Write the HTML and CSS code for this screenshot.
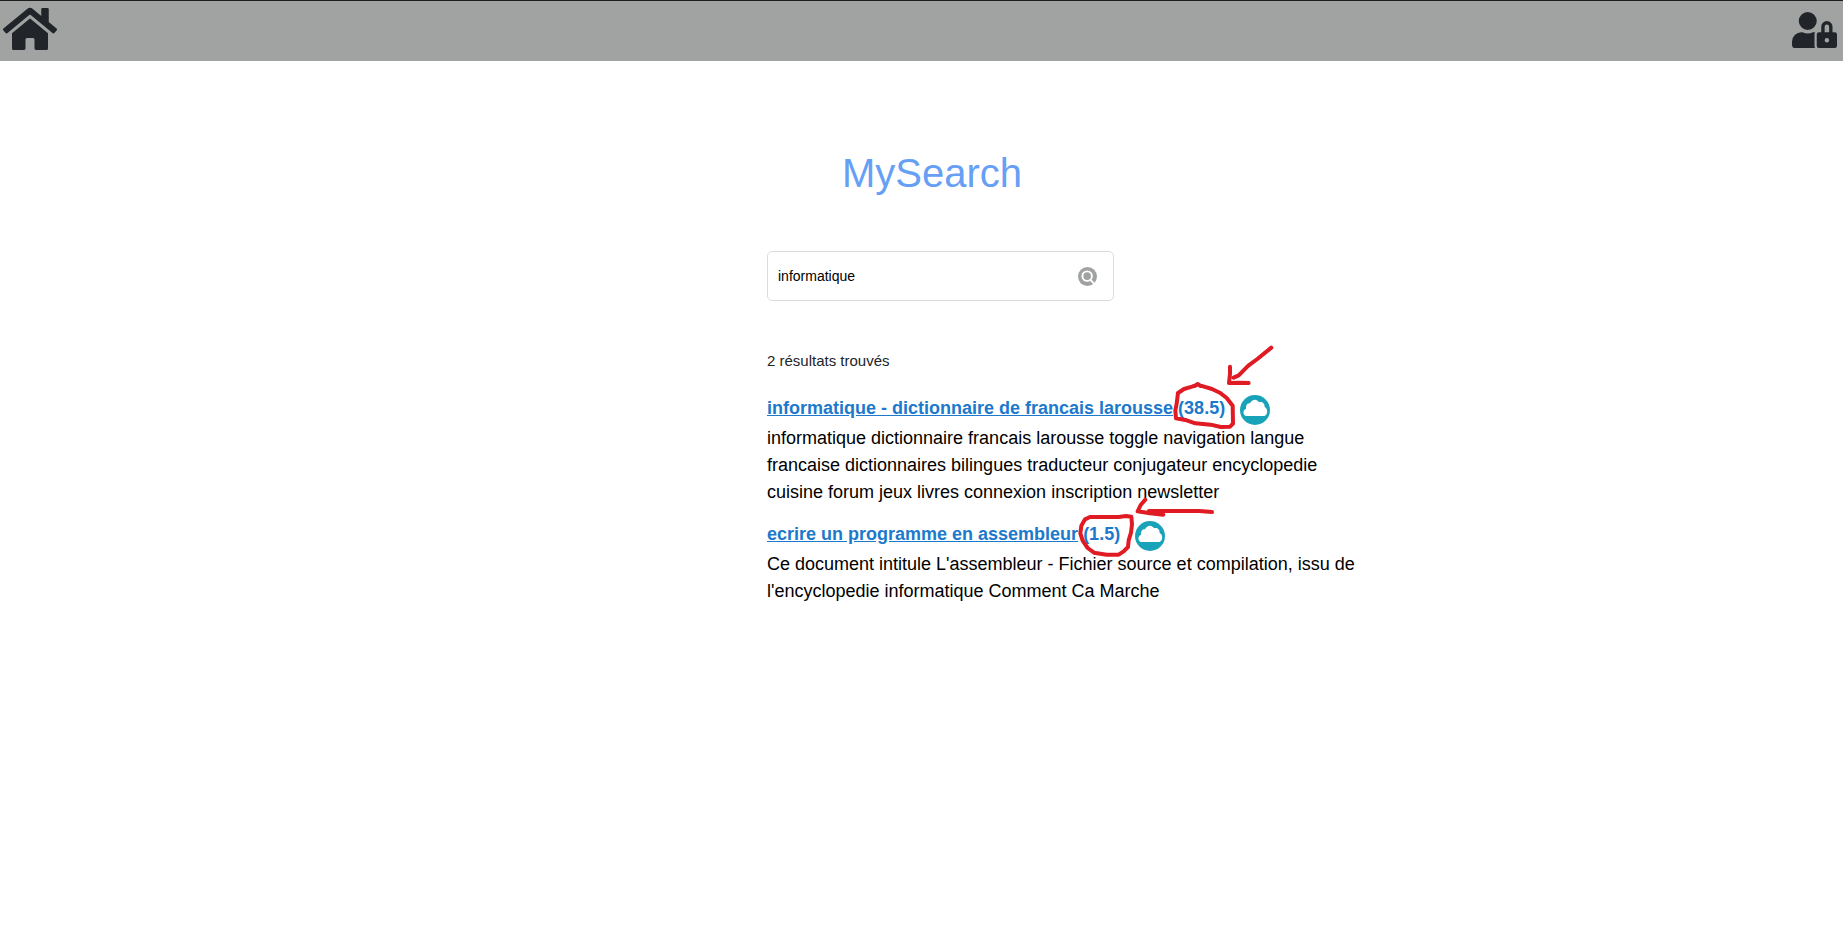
FILE: index.html
```
<!DOCTYPE html>
<html lang="fr">
<head>
<meta charset="utf-8">
<title>MySearch</title>
<link rel="stylesheet" href="styles.css">
</head>
<body>
<header class="topbar">
  <svg class="icon-home" viewBox="0 0 576 512"><path d="M280.37 148.26L96 300.11V464a16 16 0 0 0 16 16l112.06-.29a16 16 0 0 0 15.92-16V368a16 16 0 0 1 16-16h64a16 16 0 0 1 16 16v95.64a16 16 0 0 0 16 16.05L464 480a16 16 0 0 0 16-16V300L295.67 148.26a12.19 12.19 0 0 0-15.3 0zM571.6 251.47L488 182.56V44.05a12 12 0 0 0-12-12h-56a12 12 0 0 0-12 12v72.61L318.47 43a48 48 0 0 0-61 0L4.34 251.47a12 12 0 0 0-1.6 16.9l25.5 31A12 12 0 0 0 45.15 301l235.22-193.74a12.19 12.19 0 0 1 15.3 0L530.9 301a12 12 0 0 0 16.9-1.6l25.5-31a12 12 0 0 0-1.7-16.93z"/></svg>
  <svg class="icon-lock" viewBox="0 0 640 512"><path d="M224 256A128 128 0 1 0 96 128a128 128 0 0 0 128 128zm96 64a63.08 63.08 0 0 1 8.1-30.5c-4.8-.5-9.5-1.5-14.5-1.5h-16.7a174.08 174.08 0 0 1-145.8 0h-16.7A134.43 134.43 0 0 0 0 422.4V464a48 48 0 0 0 48 48h280.9a63.54 63.54 0 0 1-8.9-32zm288-32h-32v-80a80 80 0 0 0-160 0v80h-32a32 32 0 0 0-32 32v160a32 32 0 0 0 32 32h224a32 32 0 0 0 32-32V320a32 32 0 0 0-32-32zM496 432a32 32 0 1 1 32-32 32 32 0 0 1-32 32zm32-144h-64v-80a32 32 0 0 1 64 0z"/></svg>
</header>
<main class="content">
  <h1 class="brand">MySearch</h1>
  <div class="search">
    <span class="query">informatique</span>
    <svg class="search-icon" viewBox="0 0 54 54"><circle cx="27" cy="27" r="27"/><circle class="lens" cx="26" cy="26" r="13.5"/><path class="lens" d="M35 36l13 14"/></svg>
  </div>
  <p class="count">2 résultats trouvés</p>
  <article class="result">
    <div class="result-head"><h2 class="result-title"><a class="link" href="#">informatique - dictionnaire de francais larousse</a> (38.5)</h2>
      <svg class="cloud" viewBox="0 0 90 90"><circle cx="45" cy="45" r="45"/><path d="M20 63C7 61 8 45 18 41C17 30 22 24 30 25C36 12 51 11 57 22C66 19 75 26 74 36C84 41 84 58 75 62Q73 63 70 63Z"/></svg></div>
    <p class="excerpt">informatique dictionnaire francais larousse toggle navigation langue francaise dictionnaires bilingues traducteur conjugateur encyclopedie cuisine forum jeux livres connexion inscription newsletter</p>
  </article>
  <article class="result">
    <div class="result-head"><h2 class="result-title"><a class="link" href="#">ecrire un programme en assembleur</a> (1.5)</h2>
      <svg class="cloud" viewBox="0 0 90 90"><circle cx="45" cy="45" r="45"/><path d="M20 63C7 61 8 45 18 41C17 30 22 24 30 25C36 12 51 11 57 22C66 19 75 26 74 36C84 41 84 58 75 62Q73 63 70 63Z"/></svg></div>
    <p class="excerpt">Ce document intitule L'assembleur - Fichier source et compilation, issu de l'encyclopedie informatique Comment Ca Marche</p>
  </article>
</main>
<svg class="marks" viewBox="0 0 1843 938">
  <g transform="translate(1040 335) scale(.33333)">
    <path d="M414 174L432 162L456 155L473 149L492 155L516 162L541 174L560 189L578 212L579 266L570 275L542 276L512 269L466 265L440 256L408 250L406 226L410 206L414 174M464 153L473 147L482 153"/>
    <path d="M694 38L652 72L625 92L596 121L581 128M570 95V116L567 144L598 143L626 144"/>
  </g>
  <g transform="translate(1050 490) scale(.33333)">
    <path d="M244 80L228 78L206 81H120L105 88L94 107L91 130L98 152L113 174L132 188L170 194H206L221 184L234 171L236 151L243 128L246 103L244 80"/>
    <path d="M286 29L272 45L263 64L300 70L340 74M297 63H448L486 66M300 66L330 70"/>
  </g>
</svg>
</body>
</html>
```
FILE: styles.css
```
* { box-sizing: border-box; }
body { margin: 0; background: #fff; color: #212529; font-family: "Liberation Sans", Arial, sans-serif; }
.topbar { display: flex; justify-content: space-between; height: 61px; padding: 4px 6px 0 3px; border-top: 1px solid #1c1c1c; background: #a1a3a2; }
.topbar svg { fill: #212529; }
.icon-home { width: 54px; height: 48px; }
.icon-lock { width: 45px; height: 36px; margin-top: 7px; }
.content { width: 600px; margin-left: 767px; }
.brand { margin: 88px 0 0 75px; font-size: 40px; line-height: 48px; font-weight: 400; color: #679ff5; }
.search { display: flex; align-items: center; justify-content: space-between; width: 347px; height: 50px; margin-top: 54px; padding: 0 16px 0 10px; border: 1px solid #dadcdd; border-radius: 5px; }
.query { font-size: 14px; color: #000; }
.search-icon { width: 19px; height: 19px; fill: #a0a2a1; }
.lens { fill: none; stroke: #fff; stroke-width: 5.5; }
.count { margin: 48px 0 0; font-size: 15px; line-height: 24px; }
.result { margin-top: 22px; }
.result + .result { margin-top: 15px; }
.result-head { display: flex; align-items: flex-start; gap: 15px; height: 30px; }
.result-title { margin: 0; font-size: 18px; line-height: 27px; font-weight: 700; color: #1c79cc; }
.link { color: inherit; text-decoration: underline; }
.cloud { width: 30px; height: 30px; fill: #19a3b9; }
.cloud path { fill: #fff; }
.excerpt { margin: 0; font-size: 18px; line-height: 27px; color: #000; }
.marks { position: absolute; top: 0; left: 0; width: 1843px; height: 938px; pointer-events: none; fill: none; stroke: #e01b24; stroke-width: 12; stroke-linecap: round; stroke-linejoin: round; }
```
